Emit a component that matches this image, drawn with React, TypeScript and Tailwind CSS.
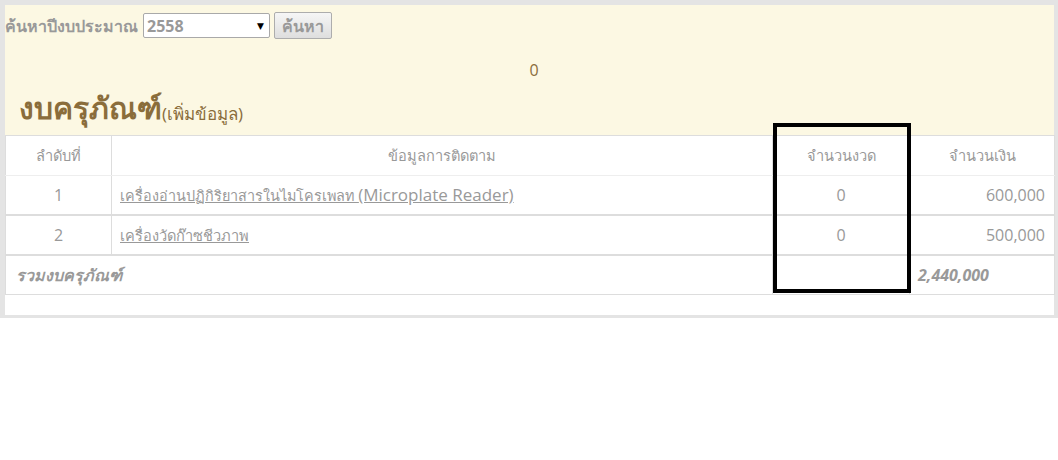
import React from "react";

const font = { fontFamily: '"Open Sans", "Noto Sans", "DejaVu Sans", sans-serif' };

const th = "font-normal border border-[#ddd] border-b-[#eee] text-center text-[14.6px]";

export default function App() {
  return (
    <div className="w-[1058px] h-[460px] bg-white" style={font}>
      <div className="bg-[#e4e4e4] pt-[5px] pl-[5px] pr-[4px] pb-[3px]">
        <div className="relative bg-white">
          <div className="bg-[#fcf8e3] h-[130px] flex flex-col">
            <div className="flex items-center h-[27px] mt-[7px]">
              <span className="text-[16px] font-bold text-[#999] leading-[20px]">ค้นหาปีงบประมาณ</span>
              <div className="ml-[5px] w-[127px] h-[25px] bg-white border border-[#a9a9a9] rounded-[2px] flex items-center justify-between px-[3px]">
                <span className="text-[16px] font-bold text-[#999] leading-[20px]">2558</span>
                <span className="text-[9px] text-black mr-[2px]">▼</span>
              </div>
              <button className="ml-[4px] h-[27px] w-[58px] bg-gradient-to-b from-[#f6f6f6] to-[#dedede] border border-[#adadad] rounded-[2px] text-[16px] font-bold text-[#999] leading-[20px]">
                ค้นหา
              </button>
            </div>
            <div className="mt-[19px] pl-[9px] text-center text-[16px] text-[#8a6d3b] leading-[24px]">0</div>
            <div className="mt-[7px] pl-[14px] flex items-end">
              <span className="text-[30px] font-bold text-[#8a6d3b] leading-[38px]">งบครุภัณฑ์</span>
              <span className="text-[17px] text-[#8a6d3b] leading-[26px]">(เพิ่มข้อมูล)</span>
            </div>
          </div>
          <table className="w-[1049px] border-collapse text-[16px] text-[#999] table-fixed">
            <colgroup>
              <col className="w-[106px]" />
              <col className="w-[661px]" />
              <col className="w-[137px]" />
              <col className="w-[145px]" />
            </colgroup>
            <thead>
              <tr className="h-[40px]">
                <th className={th}>ลำดับที่</th>
                <th className={th}>ข้อมูลการติดตาม</th>
                <th className={th}>จำนวนงวด</th>
                <th className={th}>จำนวนเงิน</th>
              </tr>
            </thead>
            <tbody>
              <tr className="h-[39px]">
                <td className="border border-[#ddd] border-t-[#eee] text-center">1</td>
                <td className="border border-[#ddd] border-t-[#eee] px-[8px]">
                  <a className="underline text-[#999]">
                    <span className="text-[14.4px]">เครื่องอ่านปฏิกิริยาสารในไมโครเพลท</span>{" "}
                    <span className="text-[17px]">(Microplate Reader)</span>
                  </a>
                </td>
                <td className="border border-[#ddd] border-t-[#eee] text-center">0</td>
                <td className="border border-[#ddd] border-t-[#eee] text-right pr-[9px]">600,000</td>
              </tr>
            </tbody>
            <tbody>
              <tr className="h-[40px]">
                <td className="border border-[#ddd] border-t-2 text-center">2</td>
                <td className="border border-[#ddd] border-t-2 px-[8px]">
                  <a className="underline text-[#999] text-[14.6px]">เครื่องวัดก๊าซชีวภาพ</a>
                </td>
                <td className="border border-[#ddd] border-t-2 text-center">0</td>
                <td className="border border-[#ddd] border-t-2 text-right pr-[9px]">500,000</td>
              </tr>
            </tbody>
            <tbody>
              <tr className="h-[40px]">
                <td colSpan={2} className="border border-[#ddd] border-t-2 px-[10px] font-bold italic">รวมงบครุภัณฑ์</td>
                <td className="border border-[#ddd] border-t-2"></td>
                <td className="border border-[#ddd] border-t-2 px-[8px] font-bold italic">2,440,000</td>
              </tr>
            </tbody>
          </table>
          <div className="h-[20px]" />
          <div className="absolute left-[768px] top-[118px] w-[138px] h-[170px] border-[4px] border-black" />
        </div>
      </div>
    </div>
  );
}
